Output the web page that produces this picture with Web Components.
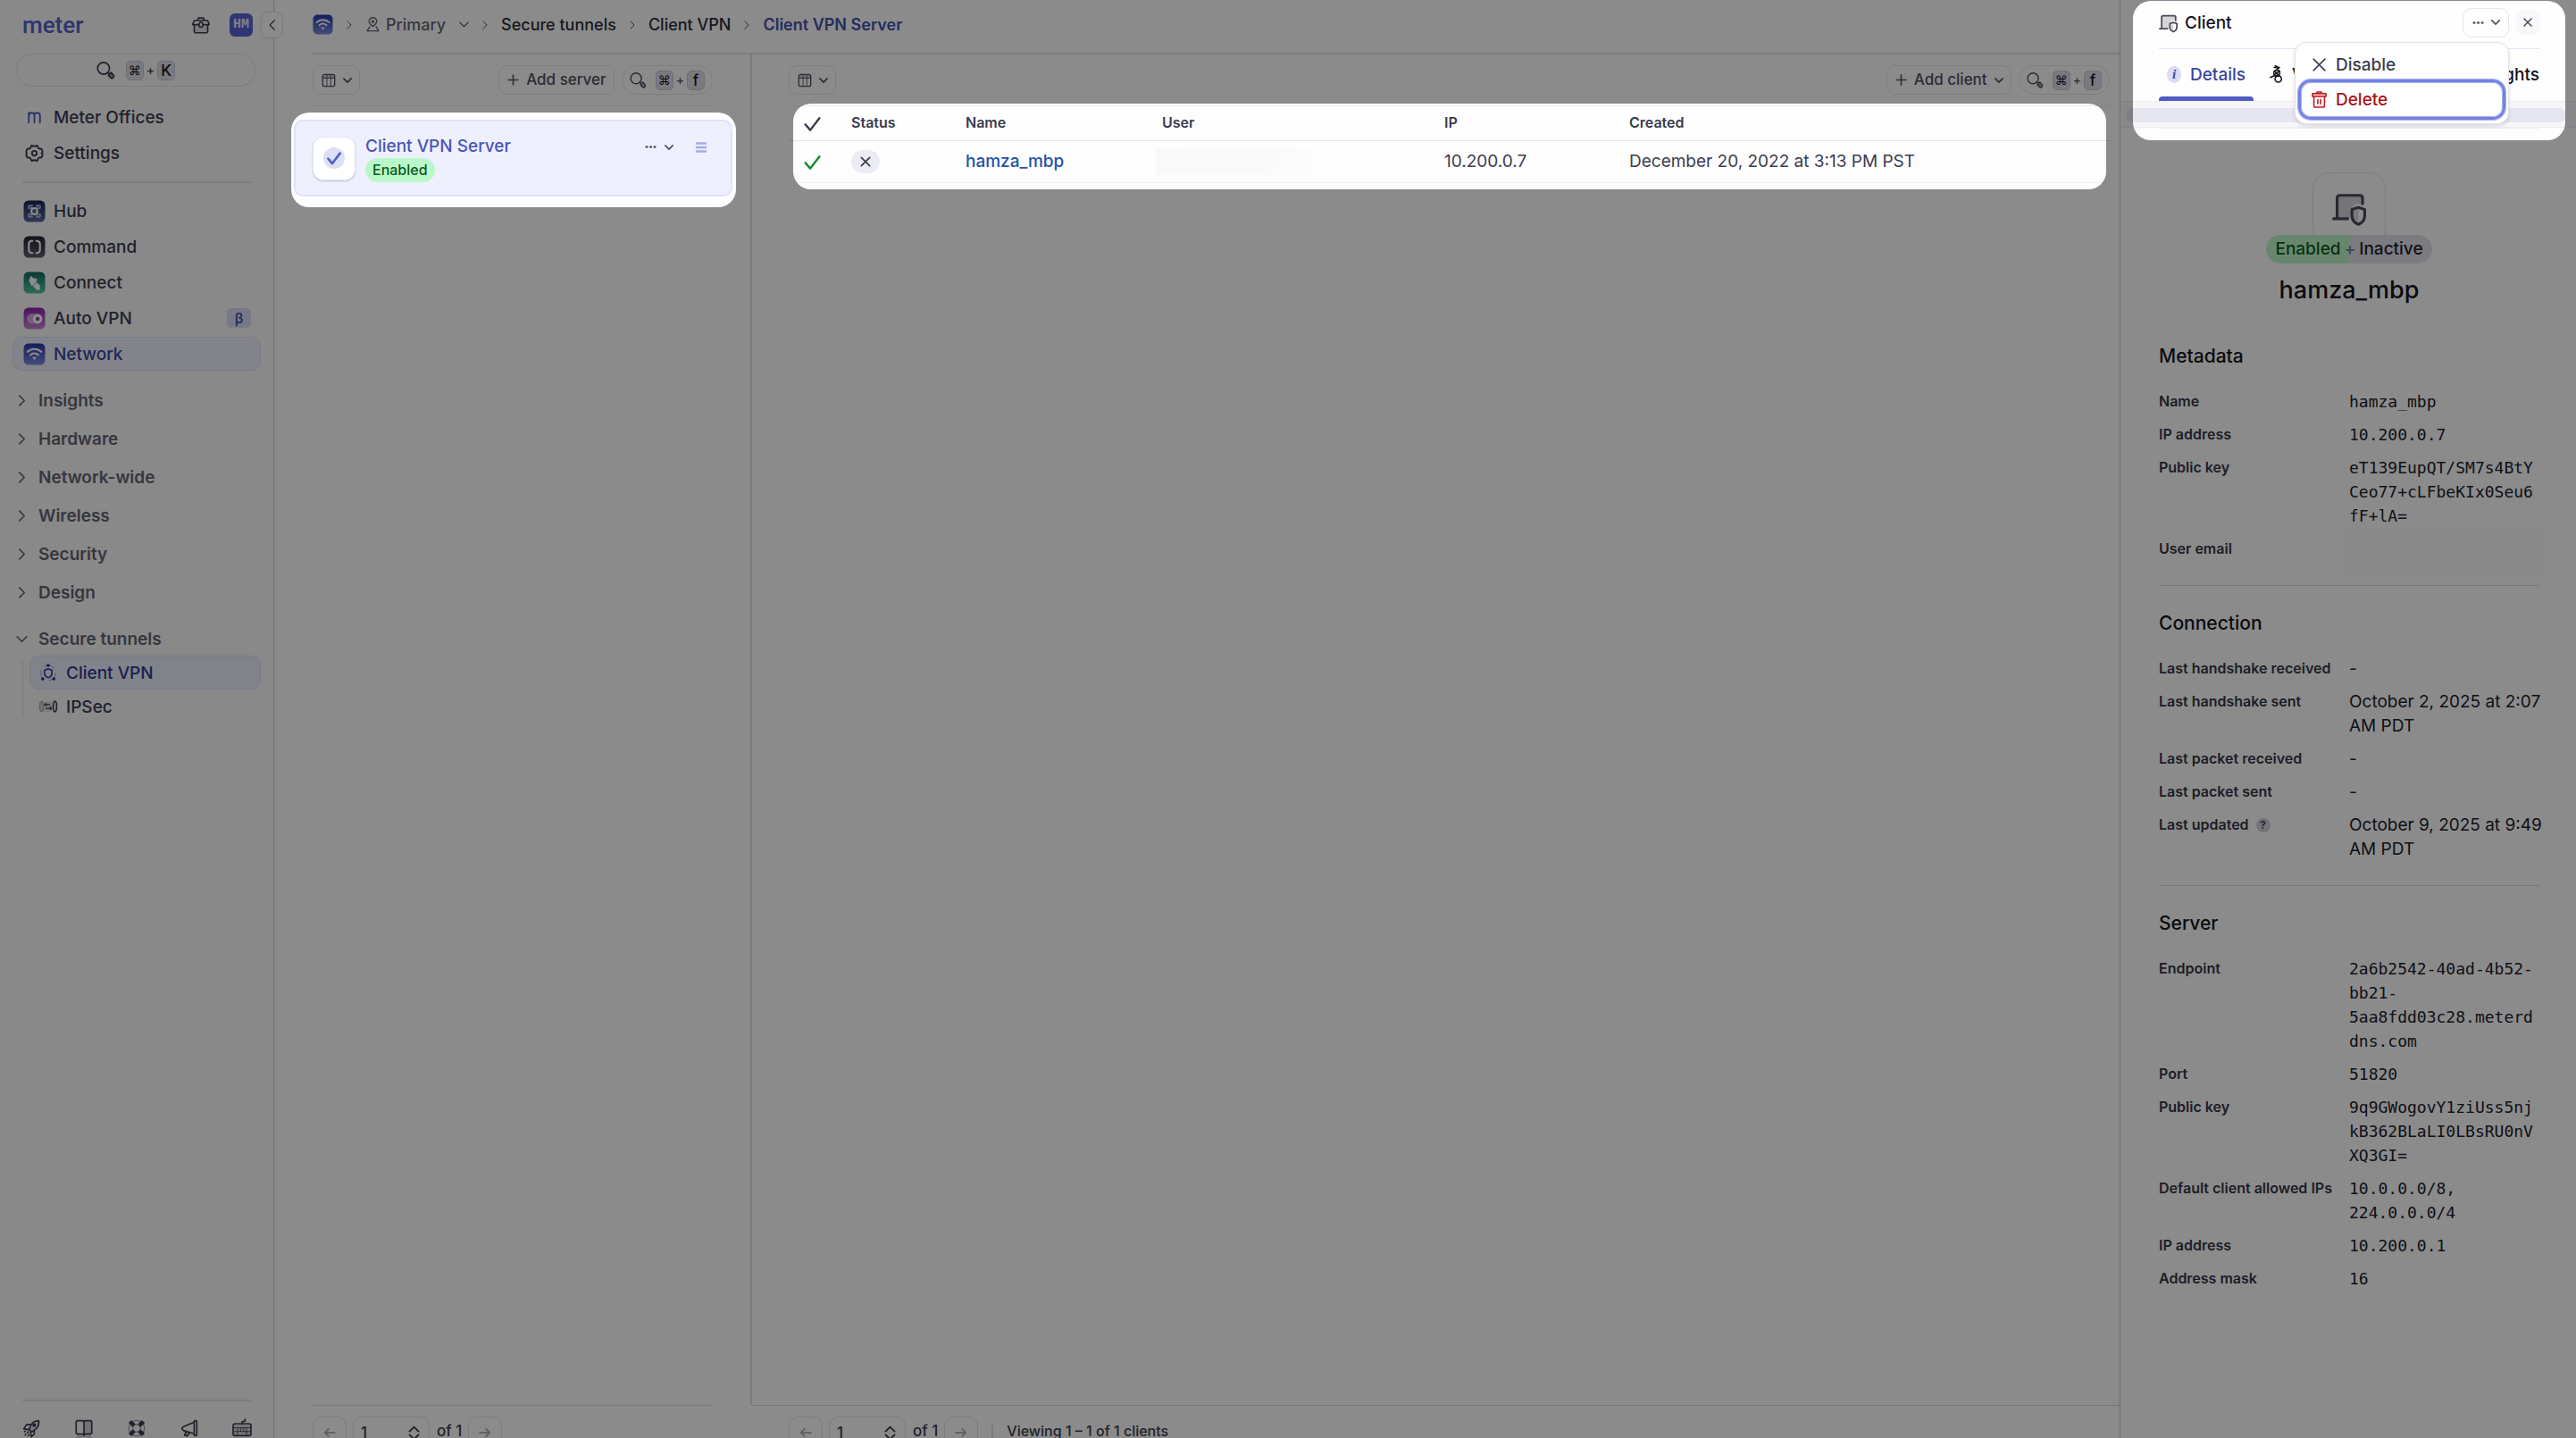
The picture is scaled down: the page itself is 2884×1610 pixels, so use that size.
<!DOCTYPE html>
<html lang="en">
<head>
<meta charset="utf-8">
<title>Client VPN Server</title>
<style>
  html, body { margin: 0; height: 100%; overflow: hidden; }
  body {
    --ink: #14141c; --text: #3c3c50; --muted: #646474; --brand: #5461c8; --brand-ink: #3a479c;
    --line: #e2e2f2; --soft: #ececf1; --mono: "DejaVu Sans Mono", "Liberation Mono", monospace;
    font: 500 19px/27px Inter, "Liberation Sans", sans-serif; color: var(--text); background: #fefefe;
  }
</style>
</head>
<body>
<vpn-app></vpn-app>
<script>
const define = (name, css, html) => customElements.define(name, class extends HTMLElement {
  constructor() {
    super();
    const t = document.createElement('template');
    t.innerHTML = `<style>*{box-sizing:border-box}button,input{font:inherit;color:inherit;margin:0}a{color:inherit;text-decoration:none}${css}</style>` +
      (typeof html === 'function' ? html(this) : html);
    this.attachShadow({ mode: 'open' }).append(t.content.cloneNode(true));
  }
});

const tile = (id, a, b, body) => `<defs><linearGradient id="${id}" x2="0" y2="1"><stop stop-color="${a}"/><stop offset="1" stop-color="${b}"/></linearGradient></defs>
  <rect x=".5" y=".5" width="23" height="23" rx="5" fill="url(#${id})" stroke="none"/>${body}`;
const icons = {
  left: '<path d="M16 3l-9 9 9 9"/>',
  right: '<path d="M7 2l10 10L7 22"/>',
  down: '<path d="M2 7l10 10L22 7"/>',
  x: '<path d="M4 4l16 16M20 4L4 20"/>',
  check: '<path d="M2 13l7 8L22 4"/>',
  plus: '<path d="M12 2v20M2 12h20"/>',
  dots: '<g fill="currentColor" stroke="none"><rect x="1" y="9.500" width="5.500" height="5" rx="2"/><rect x="9.300" y="9.500" width="5.500" height="5" rx="2"/><rect x="17.600" y="9.500" width="5.500" height="5" rx="2"/></g>',
  grip: '<g stroke-linecap="butt"><path d="M0 3h24M0 12h24M0 21h24"/></g>',
  arrowl: '<path d="M22 12H3M10 5l-7 7 7 7"/>',
  arrowr: '<path d="M2 12h19M14 5l7 7-7 7"/>',
  updown: '<path d="M4 9l8-8 8 8M4 15l8 8 8-8"/>',
  search: '<circle cx="9.500" cy="9" r="8"/><path d="M15 14.500l2 1.500"/><path d="M16 18.500l3.500-4 3.500 4c1.500 2-1.500 5-3.500 3.500z" fill="currentColor" fill-opacity=".5"/>',
  bag: '<path d="M7.500 6l1-3.500h7L16.500 6M3 6h18l2 5-2 2v8l-1.200 1.500H4.200L3 21v-8l-2-2z"/><path d="M3 12h18v10H3z" fill="currentColor" fill-opacity=".12" stroke="none"/><path d="M1.500 11.500H9M15 11.500h7.500"/><rect x="9.500" y="8.500" width="5" height="6.500" rx="2.300"/>',
  gear: '<g transform="translate(2.400 2.400) scale(.8)" stroke-width="2.300"><path d="M8.500 1.500q3.500 2.500 7 0l2 3.800q.3.700 1.200.7l3 .3q2 3 .8 5.700-1.800 0 0 0 1.200 2.700-.8 5.700l-3 .3q-.9 0-1.200.7l-2 3.800q-3.500-2.500-7 0l-2-3.800q-.3-.7-1.200-.7l-3-.3q-2-3-.8-5.700-1.200-2.700.8-5.700l3-.3q.9 0 1.200-.7z"/><circle cx="12" cy="12" r="3.200"/></g>',
  m: '<rect x=".5" y=".5" width="23" height="23" rx="5" fill="#fff" fill-opacity=".6" stroke="none"/><path stroke="#5461c8" stroke-width="1.900" d="M6 17.500V7M6 10.500C6 8 7.500 7 9 7s3 1 3 3v7.500M12 10c0-2 1.500-3 3-3s3 1 3 3v7.500"/>',
  hub: tile('h', '#1c2450', '#5a659c', '<g stroke="#aab2dd" stroke-width="1.600"><path d="M6 9V6h4M14 6h4v3M18 15v3h-4M10 18H6v-3"/><circle cx="7.500" cy="7.500" r="1.600"/><circle cx="16.500" cy="7.500" r="1.600"/><circle cx="7.500" cy="16.500" r="1.600"/><circle cx="16.500" cy="16.500" r="1.600"/></g><circle cx="12" cy="12" r="3.300" stroke="#fff" stroke-width="2" fill="#59648f"/>'),
  command: tile('c', '#22222e', '#5d5d70', '<path stroke="#fff" stroke-width="2" d="M10 5.500H8.500Q6 6.500 6 9v6q0 2.500 2.500 3.500H10M14 5.500h1.500Q18 6.500 18 9v6q0 2.500-2.500 3.500H14"/>'),
  connect: tile('k', '#0f6a62', '#55c4a0', '<path fill="#fff" stroke="none" d="M6 9.500l2.500-5 2 2.500 4.500 1-1 4-5 3.500zM10 15.500l5-3.500 3 3v4.500l-2.500 1z"/>'),
  vpn: tile('v', '#8b22ac', '#c985d0', '<rect x="4" y="7" width="16.500" height="10.500" rx="5.200" fill="#e9c6ef" fill-opacity=".75" stroke="none"/><circle cx="15.500" cy="12.500" r="3.600" stroke="#fff" stroke-width="3" fill="#8f3aa6"/>'),
  wifi: tile('w', '#2438a8', '#7d8be0', '<g stroke="#fff" stroke-width="2"><path d="M4.500 9.500c4.500-4 10.500-4 15 0M7.800 12.800c2.700-2.300 5.700-2.300 8.400 0"/><path fill="#fff" stroke="none" d="M9.500 15.200h5L12 18.200z"/></g>'),
  pin: '<path d="M12 15c-3-2.500-6-5-6-8a6 6 0 0 1 12 0c0 3-3 5.500-6 8z"/><circle cx="12" cy="7.500" r="1.500"/><path d="M7 15.500L3 22h18l-4-6.500"/>',
  table: '<rect x="2" y="2" width="20" height="20" rx="3"/><path d="M2 8h20" stroke-width="1.500"/><path d="M9 3v18M15.500 3v18" stroke-width="1.300"/><rect x="2" y="3" width="20" height="5" fill="currentColor" fill-opacity=".25" stroke="none"/>',
  shieldnet: '<circle cx="12" cy="12.500" r="10" stroke-opacity=".35" stroke-width="1.300" stroke-dasharray="14 7"/><path d="M12 7l5 2v4c0 3-2 5-5 6-3-1-5-3-5-6V9z"/><g fill="currentColor" stroke="none"><circle cx="12" cy="2.500" r="2.200"/><circle cx="4.500" cy="20.500" r="2.200"/><circle cx="19.500" cy="20.500" r="2.200"/></g>',
  ipsec: '<rect x="0" y="5" width="18" height="14" rx="4" fill="currentColor" fill-opacity=".12" stroke="none"/><ellipse cx="3" cy="12" rx="2.200" ry="7" stroke-opacity=".4" stroke-width="1.500"/><ellipse cx="21" cy="12" rx="2.300" ry="7" stroke-width="2"/><path stroke-width="1.500" d="M14 9.500H7.500M9 8L7 9.500 9 11M9 14.500h7M14.500 13l2 1.500-2 1.500"/>',
  rocket: '<path d="M22 2c-6 0-9 3-11 7l-2 5 4 3 4-3c4-3 6-6 5-12z" fill="currentColor" fill-opacity=".12"/><path d="M11 7H6l-4 6 7 1M16 15v5l-4 3.500-1-6"/><circle cx="16" cy="8" r="1.500" fill="currentColor"/><path stroke-dasharray="1.500 3" d="M8 17l-5 5M4 16l-2 1.500M9 21l-2 2"/>',
  book: '<path d="M12 3.500L10.500 2H3L1.500 3.500v15L3 20h7.500l1.500 1.500zM12 3.500L13.500 2H21l1.500 1.500v15L21 20h-7.500L12 21.500z"/><path d="M12 3h10v17H12z" fill="currentColor" fill-opacity=".22" stroke="none"/><path d="M3 23.500h18" stroke-opacity=".25"/>',
  buoy: '<circle cx="12" cy="12" r="10.500" stroke-opacity=".5" stroke-width="1.500"/><circle cx="12" cy="12" r="5" stroke-opacity=".5" stroke-width="1.500"/><path stroke-width="5.500" stroke-linecap="butt" d="M3 3l5.500 5.500M21 3l-5.500 5.500M3 21l5.500-5.500M21 21l-5.500-5.500"/>',
  horn: '<rect x="18.500" y="2" width="3.500" height="20" rx="1"/><path d="M18.500 4L5 9.500q-3 1.500-3 3T5 15.500l13.500 4"/><path d="M7.500 17l-2 4.500 3.500 1 3.500-4.500" fill="currentColor" fill-opacity=".25"/>',
  keyboard: '<rect x="0" y="6" width="24" height="16" rx="2.500"/><path d="M12 6V3.500l4-1V0"/><path d="M1 11.500h22M1 16.500h22M6 11.500v5M10 11.500v5M14 11.500v5M18 11.500v5M6 16.500v5M18 16.500v5" stroke-width="1"/><path d="M1 7h22v14H1z" fill="currentColor" fill-opacity=".18" stroke="none"/>',
  laptop: '<path d="M3.500 19V5q0-2 2-2h14q2 0 2 2v4H17l-4 3v7z" fill="currentColor" fill-opacity=".22" stroke="none"/><path d="M1 19.500h10M3.500 19V5q0-2 2-2h14q2 0 2 2v4"/><path d="M18.500 11.500l4.500 1.500v4.500c0 3-2 5-4.500 6-2.500-1-4.500-3-4.500-6V13z"/><path d="M18.500 12.500v10c-2-1-3.500-3-3.500-5v-4z" fill="currentColor" fill-opacity=".2" stroke="none"/>',
  wire: '<g stroke-width="1.900"><path d="M8.500 3h7l-3.500 2.500 4 2.500M10 1l3 1"/><circle cx="12" cy="10.500" r="4"/><path d="M8.500 13l7-5M9 8l6 6"/><circle cx="14" cy="18.500" r="4.300"/><path d="M3.500 16.500c3-2 6-3 10-2"/></g>',
  trash: '<path d="M2.500 3.500h19v4h-19zM8 3.500L9 1.200h6l1 2.300M4.500 7.500V21q0 1.800 1.800 1.800h11.400q1.800 0 1.800-1.800V7.500M10 12v6M14 12v6"/><path d="M2.500 3.500h19v4h-19z" fill="currentColor" fill-opacity=".25" stroke="none"/>'
};

define('ui-icon', ':host{display:inline-flex;flex:none}svg{display:block;overflow:visible}', el => {
  const s = el.getAttribute('size') || 20;
  return `<svg width="${s}" height="${s}" viewBox="0 0 24 24" fill="none" stroke="currentColor" stroke-width="${el.getAttribute('weight') || 2}" stroke-linecap="round" stroke-linejoin="round" aria-hidden="true">${icons[el.getAttribute('name')]}</svg>`;
});

define('key-combo', `:host{display:inline-flex;align-items:center;gap:3px;font:500 14px/20px Inter,sans-serif}
  kbd{width:20px;height:22px;display:grid;place-items:center;border:1px solid #c6c6da;border-radius:5px;background:#dcdce8;font:500 17px/18px Inter,sans-serif;color:var(--ink)}
  .cmd{font:14px/18px "DejaVu Sans",sans-serif}`,
  '<kbd class="cmd">⌘</kbd><span>+</span><kbd><slot></slot></kbd>');

define('nav-item', `:host{display:block}
  a{display:flex;align-items:center;gap:9px;height:38px;padding:0 10px 0 11px;border:1px solid transparent;border-radius:10px}
  :host([active]) a{background:#eff0fd;border-color:#dcdefa;color:var(--brand-ink)}
  :host([sub]) a{gap:10px;padding-left:10px}
  :host([sub][active]) a{background:#eceefd;color:#2f3b94}
  span{flex:1}`,
  el => `<a href="#"><ui-icon name="${el.getAttribute('icon')}" size="${el.getAttribute('size') || 25}"></ui-icon><span><slot></slot></span><slot name="badge"></slot></a>`);

define('nav-group', `:host{display:block;color:var(--muted);font-weight:600}
  button{display:flex;align-items:center;gap:12px;width:100%;height:43px;padding:0 0 0 18px;border:0;background:none;text-align:left}
  :host([open]) button{height:38px}`,
  el => `<button type="button" aria-expanded="${el.hasAttribute('open')}"><ui-icon name="${el.hasAttribute('open') ? 'down' : 'right'}" size="13" weight="3"></ui-icon><slot></slot></button>`);

define('side-nav', `:host{display:flex;flex-direction:column;position:relative;width:307px;flex:none;background:#f9f9f9;border-right:1px solid #cfcfd2;box-sizing:border-box;box-shadow:0 0 4px #0002;z-index:2}
  header{display:flex;align-items:center;height:56px;padding:0 23px 0 25px}
  .logo{flex:1;font:500 26px/32px Roboto,sans-serif;color:var(--brand)}
  .icon{border:0;background:none;padding:0;display:flex;margin-right:22px}
  .me{width:26px;height:26px;border:0;border-radius:6px;padding:0;background:#5663d2;color:#e9eaf8;font:700 15px/26px "Liberation Mono",monospace}
  .search{display:flex;align-items:center;justify-content:center;gap:13px;margin:4px 20px 15px 18px;height:37px;border:1px solid var(--line);border-radius:19px;background:none;padding:0}
  nav{display:flex;flex-direction:column;gap:2px;padding:0 14px}
  hr{border:0;height:2px;background:var(--line);margin:13px 25px 12px;flex:none}
  .beta{width:27px;height:22px;border-radius:5px;background:#d9dcf6;color:var(--brand-ink);display:grid;place-items:center;font:500 16px/22px Inter,sans-serif}
  .groups{padding:12px 0 11px}
  .sub{margin:0 14px 0 25px;position:relative;display:block;padding-left:8px}
  .sub::before{content:"";position:absolute;left:0;top:6px;bottom:6px;width:1px;background:#dcdce2}
  footer{display:flex;justify-content:space-between;padding:20px 25px 0;height:41px;margin-top:-12px}
  footer a{display:flex}
  .gap{flex:1}
  .collapse{position:absolute;right:-11px;top:13px;width:25px;height:30px;border:1px solid #dcdce2;border-radius:8px;background:#fdfdfd;display:grid;place-items:center;padding:0}`,
  `<header><a class="logo" href="#">meter</a><button class="icon" type="button" aria-label="Toolbox"><ui-icon name="bag" size="20"></ui-icon></button><button class="me" type="button">HM</button></header>
  <button class="search" type="button" aria-label="Search"><ui-icon name="search" size="20"></ui-icon><key-combo>K</key-combo></button>
  <nav><nav-item icon="m">Meter Offices</nav-item><nav-item icon="gear">Settings</nav-item></nav>
  <hr>
  <nav><nav-item icon="hub">Hub</nav-item><nav-item icon="command">Command</nav-item><nav-item icon="connect">Connect</nav-item>
    <nav-item icon="vpn">Auto VPN<span class="beta" slot="badge">β</span></nav-item><nav-item icon="wifi" active>Network</nav-item></nav>
  <div class="groups"><nav-group>Insights</nav-group><nav-group>Hardware</nav-group><nav-group>Network-wide</nav-group><nav-group>Wireless</nav-group><nav-group>Security</nav-group><nav-group>Design</nav-group></div>
  <nav-group open>Secure tunnels</nav-group>
  <div class="sub"><nav-item sub active icon="shieldnet" size="20">Client VPN</nav-item><nav-item sub icon="ipsec" size="20">IPSec</nav-item></div>
  <div class="gap"></div>
  <hr>
  <footer><a href="#" aria-label="Releases"><ui-icon name="rocket"></ui-icon></a><a href="#" aria-label="Docs"><ui-icon name="book"></ui-icon></a><a href="#" aria-label="Support"><ui-icon name="buoy"></ui-icon></a><a href="#" aria-label="News"><ui-icon name="horn"></ui-icon></a><a href="#" aria-label="Shortcuts"><ui-icon name="keyboard"></ui-icon></a></footer>
  <button class="collapse" type="button" aria-label="Collapse"><ui-icon name="left" size="14"></ui-icon></button>`);

define('crumb-bar', `:host{display:flex;align-items:center;gap:13px;height:61px;margin-left:43px;padding-bottom:4px;border-bottom:2px solid var(--line);box-sizing:border-box;color:#2c2c3a;font-size:18px}
  a,button{display:flex;align-items:center;gap:6px}
  button{border:0;background:none;padding:0;color:var(--muted)}
  button ui-icon:last-child{margin-left:9px}
  .cur{color:#4650b0;font-weight:600}`,
  `<a href="#" aria-label="Network"><ui-icon name="wifi" size="23"></ui-icon></a><ui-icon name="right" size="10"></ui-icon>
  <button type="button"><ui-icon name="pin" size="17"></ui-icon>Primary<ui-icon name="down" size="11" weight="3"></ui-icon></button><ui-icon name="right" size="10"></ui-icon>
  <a href="#">Secure tunnels</a><ui-icon name="right" size="10"></ui-icon><a href="#">Client VPN</a><ui-icon name="right" size="10"></ui-icon><a class="cur" href="#">Client VPN Server</a>`);

define('list-toolbar', `:host{display:flex;gap:8px;padding:12px 0;border-bottom:1px solid var(--soft);font-size:17px}
  button{display:flex;align-items:center;gap:8px;height:33px;padding:0 8px 0 9px;border:1px solid #e6e6ea;border-radius:10px;background:none;color:#50505f}
  .cols{margin-right:auto}
  .search{border-radius:17px;gap:11px;padding:0 8px}`,
  el => `<button class="cols" type="button" aria-label="Columns"><ui-icon name="table" size="16"></ui-icon><ui-icon name="down" size="10" weight="4"></ui-icon></button>
  <button type="button"><ui-icon name="plus" size="13" weight="3"></ui-icon><slot></slot>${el.hasAttribute('menu') ? '<ui-icon name="down" size="10" weight="4"></ui-icon>' : ''}</button>
  <button class="search" type="button" aria-label="Search"><ui-icon name="search" size="18"></ui-icon><key-combo>f</key-combo></button>`);

define('page-control', `:host{display:flex;gap:7px;height:37px;padding-top:12px;border-top:1px solid #dedee4;overflow:hidden;box-sizing:border-box;font-size:17px;line-height:32px}
  button{width:38px;height:36px;flex:none;display:grid;place-items:center;border:1px solid #e2e2e8;border-radius:10px;background:none;color:#a6a6b4;padding:0}
  label{display:flex;gap:8px}
  .box{display:flex;align-items:center;width:86px;height:36px;border:1px solid #e2e2e8;border-radius:10px;padding:0 9px 0 8px}
  input{min-width:0;width:100%;border:0;background:none;padding:0;outline:0;height:34px}
  ::slotted(*){margin-left:8px;padding-left:17px;font-size:16px}`,
  `<button type="button" aria-label="Previous page"><ui-icon name="arrowl" size="14" weight="3"></ui-icon></button>
  <label><span class="box"><input value="1" aria-label="Page"><ui-icon name="updown" size="15" weight="3"></ui-icon></span>of 1</label>
  <button type="button" aria-label="Next page"><ui-icon name="arrowr" size="14" weight="3"></ui-icon></button><slot></slot>`);

define('status-pill', `:host{display:inline-block;padding:0 8px;border-radius:14px;background:#b9f8c8;color:#0c5a1c;font:500 16px/27px Inter,sans-serif}`, '<slot></slot>');

define('server-card', `:host{display:flex;align-items:center;gap:11px;margin:15px 20px 0 22px;height:86px;border:2px solid #dfe2fd;border-radius:10px;background:#eef0fe;padding:0 27px 0 19px;box-sizing:border-box}
  .tile{width:48px;height:49px;border-radius:12px;background:#fff;border:1px solid #e4e6f4;box-shadow:0 1px 2px #0003;display:grid;place-items:center}
  .dot{width:24px;height:24px;border-radius:50%;background:#dcdff6;color:var(--brand);display:grid;place-items:center}
  .info{flex:1;display:flex;flex-direction:column;align-items:flex-start}
  a{color:#4a55b8;line-height:27px;display:block}
  button{display:flex;gap:9px;align-items:center;border:0;background:none;padding:0;margin:-25px 14px 0 0;color:#50505f}
  .grip{color:#a5adea;margin-right:0}`,
  `<div class="tile"><span class="dot"><ui-icon name="check" size="16" weight="4"></ui-icon></span></div>
  <div class="info"><a href="#">Client VPN Server</a><status-pill>Enabled</status-pill></div>
  <button type="button" aria-label="Actions"><ui-icon name="dots" size="13"></ui-icon><ui-icon name="down" size="10" weight="4"></ui-icon></button>
  <button class="grip" type="button" aria-label="Reorder"><ui-icon name="grip" size="12" weight="5"></ui-icon></button>`);

define('client-table', `:host{display:block}
  table{width:100%;border-collapse:collapse;table-layout:fixed}
  th{font-size:16px;font-weight:600;text-align:left;height:38px;padding:0;color:#3a3a4c;border-bottom:1px solid var(--line)}
  td{height:47px;padding:0;font-weight:400;border-bottom:1px solid #f0f0f4}
  th:first-child,td:first-child{padding-left:17px}
  ui-icon{vertical-align:middle}
  .ok{color:#0c8a28}
  .off{display:inline-grid;place-items:center;vertical-align:middle;width:32px;height:26px;border-radius:13px;background:#ececf4}
  .name{color:#1f52a8;font-weight:500}
  .hidden{display:block;width:204px;height:31px;margin-left:-7px;background:linear-gradient(90deg,#f9f9f9,#fafafa 60%,#fefefe)}`,
  `<table><colgroup><col style="width:70px"><col style="width:128px"><col style="width:220px"><col style="width:316px"><col style="width:207px"><col></colgroup>
  <thead><tr><th aria-label="Enabled"><ui-icon name="check" size="19" weight="3"></ui-icon></th><th>Status</th><th>Name</th><th>User</th><th>IP</th><th>Created</th></tr></thead>
  <tbody><tr><td class="ok"><ui-icon name="check" size="19" weight="3"></ui-icon></td><td><span class="off"><ui-icon name="x" size="14" weight="3"></ui-icon></span></td><td><a class="name" href="#">hamza_mbp</a></td><td><span class="hidden"></span></td><td>10.200.0.7</td><td>December 20, 2022 at 3:13 PM PST</td></tr></tbody></table>`);

define('detail-section', `:host{display:block;padding-bottom:27px;margin-bottom:28px;border-bottom:1px solid #dedee6}
  :host([last]){border:0}
  h2{margin:0 0 23px;font:500 21px/28px Inter,sans-serif;color:var(--ink)}
  dl{margin:0 -3px 0 0;display:flex;flex-direction:column;gap:10px}`,
  el => `<h2>${el.getAttribute('heading')}</h2><dl><slot></slot></dl>`);

define('detail-row', `:host{display:flex}
  dt{flex:0 0 213px;font-size:16px;font-weight:600;color:#363648;display:flex;gap:8px;align-items:center;align-self:flex-start;white-space:nowrap}
  dd{flex:1;min-width:0;margin:0;font-weight:400;color:#20202c;overflow-wrap:anywhere;min-height:27px}
  :host([mono]) dd{font:18px/27px var(--mono)}
  .help{width:16px;height:16px;border-radius:50%;background:#d0d0da;font:600 12px/16px Inter,sans-serif;text-align:center}`,
  el => `<dt>${el.getAttribute('label')}${el.hasAttribute('help') ? '<span class="help">?</span>' : ''}</dt><dd><slot></slot></dd>`);

define('action-menu', `:host{position:absolute;right:0;top:38px;width:240px;height:92px;border:1px solid #e4e4ea;border-radius:13px;background:#fff;box-shadow:0 2px 4px #0002;padding:3px;box-sizing:border-box;z-index:3;color:var(--text)}
  button{display:flex;align-items:center;gap:9px;width:100%;height:38px;padding:6px 14px 0;border:0;border-radius:14px;background:none}
  .del{color:#a81414;height:45px;padding:0 11px;border:3px solid #7482e4;box-shadow:inset 0 0 0 1px #a8b1f0,0 0 0 1px #a8b1f0}
  .del ui-icon{color:#c01818}`,
  `<button type="button"><ui-icon name="x" size="19"></ui-icon>Disable</button><button class="del" type="button"><ui-icon name="trash" size="19"></ui-icon>Delete</button>`);

define('client-panel', `:host{display:block;width:511px;flex:none;border-left:1px solid #cfcfd2;background:#fefefe;box-sizing:border-box;box-shadow:-1px 0 4px #0001;z-index:1}
  header,.tabs,.body{margin:0 41px 0 43px}
  header{display:flex;align-items:center;gap:8px;height:55px;padding-bottom:4px;border-bottom:1px solid var(--line);color:var(--ink)}
  header>span{flex:1}
  header>ui-icon,.tile{color:#4a4a5a}
  .act{position:relative}
  .act>button{display:flex;align-items:center;justify-content:center;gap:8px;width:52px;height:33px;border:1px solid #e4e4ea;border-radius:10px;background:none;color:#50505f;padding:0}
  .close{width:26px;height:27px;border:0;border-radius:6px;background:#f9f9fc;color:#4a4a5a;display:grid;place-items:center;padding:0}
  .tabs{display:flex;height:58px;color:var(--ink)}
  .tabs a{display:flex;align-items:center;gap:10px;padding:3px 9px 0;border-bottom:5px solid transparent}
  .tabs a.on{color:var(--brand-ink);width:106px;position:relative}
  .tabs a.on::after{content:"";position:absolute;left:0;right:0;bottom:-5px;height:5px;border-radius:4px 4px 0 0;background:#505cc4}
  .tabs a.second{margin-left:7px;gap:7px}
  .tabs a.end{margin-left:auto;padding-right:0}
  .info{width:19px;height:19px;border-radius:50%;background:#d9dcf3;font:italic 700 15px/19px "Liberation Serif",serif;text-align:center}
  .scroll{height:30px;padding:7px 11px 6px 6px;border:1px solid #ededf2;border-width:1px 0;background:#f7f7fb}
  .thumb{height:16px;border-radius:8px;background:#e6e6f1}
  .body{border-top:1px solid #ececf2}
  .hero{display:flex;flex-direction:column;align-items:center;padding-top:49px;margin-bottom:42px}
  .tile{width:82px;height:82px;border:1px solid #e4e4ea;border-radius:18px;display:grid;place-items:center;padding-bottom:2px}
  .state{display:flex;position:relative;margin-top:-12px;border-radius:16px;overflow:hidden;line-height:32px;background:linear-gradient(90deg,#bdf5c9 50%,#e0e0ea 50%);color:#22222e;padding:0 10px;gap:4px}
  .state b{font-weight:500;color:#0c5a1c}
  .state i{font-style:normal;color:#7a7a88}
  h1{margin:12px 0 0;font:500 27px/36px Inter,sans-serif;color:var(--ink)}
  .blur{display:block;height:54px;margin:-10px -2px -17px -7px;background:#f9f9f9}`,
  `<header><ui-icon name="laptop" size="21"></ui-icon><span>Client</span>
    <div class="act"><button type="button" aria-label="Actions"><ui-icon name="dots" size="13"></ui-icon><ui-icon name="down" size="10" weight="4"></ui-icon></button><action-menu></action-menu></div>
    <button class="close" type="button" aria-label="Close"><ui-icon name="x" size="12" weight="3"></ui-icon></button></header>
  <div class="tabs"><a class="on" href="#"><span class="info">i</span>Details</a><a class="second" href="#"><ui-icon name="wire" size="20"></ui-icon>V</a><a class="end" href="#">Insights</a></div>
  <div class="scroll"><div class="thumb"></div></div>
  <div class="body"><div class="hero"><div class="tile"><ui-icon name="laptop" size="38"></ui-icon></div><div class="state"><b>Enabled</b><i>+</i><span>Inactive</span></div><h1>hamza_mbp</h1></div>
    <detail-section heading="Metadata"><detail-row mono label="Name">hamza_mbp</detail-row><detail-row mono label="IP address">10.200.0.7</detail-row><detail-row mono label="Public key">eT139EupQT/SM7s4BtYCeo77+cLFbeKIx0Seu6fF+lA=</detail-row><detail-row label="User email"><span class="blur"></span></detail-row></detail-section>
    <detail-section heading="Connection"><detail-row label="Last handshake received">-</detail-row><detail-row label="Last handshake sent">October 2, 2025 at 2:07 AM PDT</detail-row><detail-row label="Last packet received">-</detail-row><detail-row label="Last packet sent">-</detail-row><detail-row help label="Last updated">October 9, 2025 at 9:49 AM PDT</detail-row></detail-section>
    <detail-section last heading="Server"><detail-row mono label="Endpoint">2a6b2542-40ad-4b52-bb21-5aa8fdd03c28.meterddns.com</detail-row><detail-row mono label="Port">51820</detail-row><detail-row mono label="Public key">9q9GWogovY1ziUss5njkB362BLaLI0LBsRU0nVXQ3GI=</detail-row><detail-row mono label="Default client allowed IPs">10.0.0.0/8, 224.0.0.0/4</detail-row><detail-row mono label="IP address">10.200.0.1</detail-row><detail-row mono label="Address mask">16</detail-row></detail-section>
  </div>`);

define('spot-light', `:host{position:absolute;inset:0;pointer-events:none;z-index:9}
  svg{display:block;width:100%;height:100%}
  .card{x:326px;y:126px;width:498px;height:106px}
  .table{x:888px;y:116px;width:calc(100% - 1414px);height:96px}
  .panel{x:calc(100% - 496px);y:1px;width:484px;height:156px}`,
  `<svg aria-hidden="true"><mask id="m"><rect width="100%" height="100%" fill="#fff"/><rect class="card" rx="20"/><rect class="table" rx="20"/><rect class="panel" rx="20"/></mask><rect width="100%" height="100%" fill="#000" fill-opacity=".45" mask="url(#m)"/></svg>`);

define('vpn-app', `:host{display:flex;position:relative;height:100vh;overflow:hidden}
  main{flex:1;min-width:0;display:flex;flex-direction:column}
  .cols{flex:1;display:flex;min-height:0}
  section{display:flex;flex-direction:column}
  .servers{width:535px;flex:none}
  .clients{flex:1;min-width:0}
  .area{flex:1;min-height:0}
  .servers .area{border-right:2px solid #dcdcea}
  .clients .area{border-bottom:1px solid #d4d4da;margin-bottom:-1px}
  .servers list-toolbar{margin:0 42px 0 43px}
  .servers page-control{margin:0 44px 0 43px}
  .clients list-toolbar,.clients client-table{margin:0 11px 0 41px}
  .clients page-control{margin-left:41px;border-color:transparent}
  .count{position:relative}
  .count::before{content:"";position:absolute;left:0;top:9px;height:36px;width:2px;background:#dcdce8}`,
  `<side-nav></side-nav>
  <main><crumb-bar></crumb-bar><div class="cols">
    <section class="servers"><div class="area"><list-toolbar>Add server</list-toolbar><server-card></server-card></div><page-control></page-control></section>
    <section class="clients"><div class="area"><list-toolbar menu>Add client</list-toolbar><client-table></client-table></div><page-control><span class="count">Viewing 1 – 1 of 1 clients</span></page-control></section>
  </div></main>
  <client-panel></client-panel>
  <spot-light></spot-light>`);
</script>
</body>
</html>
